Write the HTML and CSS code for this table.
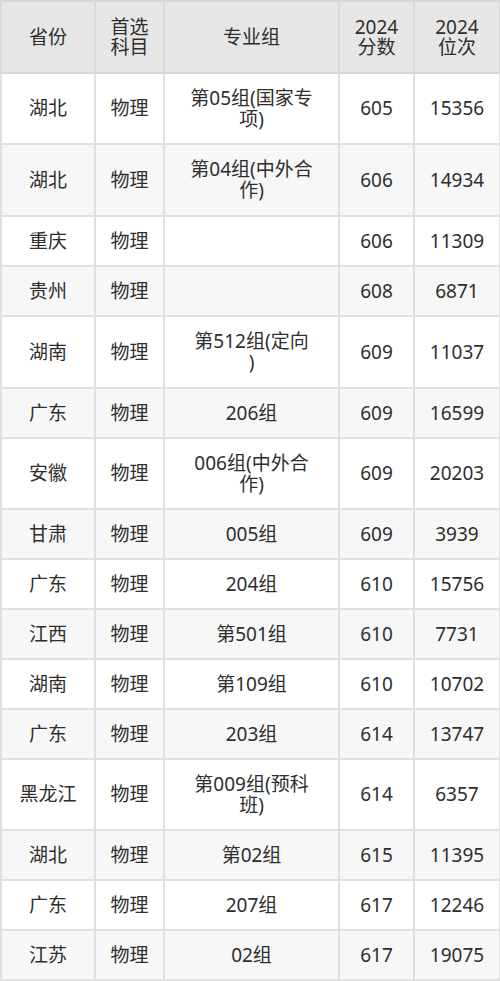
FILE: index.html
```html
<!DOCTYPE html>
<html lang="zh">
<head>
<meta charset="utf-8">
<link rel="stylesheet" href="styles.css">
</head>
<body>
<table class="tbl">
  <colgroup>
    <col class="c1"><col class="c2"><col class="c3"><col class="c4"><col class="c5">
  </colgroup>
  <thead>
    <tr class="hd"><th>省份</th><th>首选<br>科目</th><th>专业组</th><th>2024<br>分数</th><th>2024<br>位次</th></tr>
  </thead>
  <tbody>
    <tr class="tall"><td>湖北</td><td>物理</td><td>第05组(国家专<br>项)</td><td>605</td><td>15356</td></tr>
    <tr class="tall t72"><td>湖北</td><td>物理</td><td>第04组(中外合<br>作)</td><td>606</td><td>14934</td></tr>
    <tr><td>重庆</td><td>物理</td><td></td><td>606</td><td>11309</td></tr>
    <tr><td>贵州</td><td>物理</td><td></td><td>608</td><td>6871</td></tr>
    <tr class="tall t72"><td>湖南</td><td>物理</td><td>第512组(定向<br>)</td><td>609</td><td>11037</td></tr>
    <tr><td>广东</td><td>物理</td><td>206组</td><td>609</td><td>16599</td></tr>
    <tr class="tall"><td>安徽</td><td>物理</td><td>006组(中外合<br>作)</td><td>609</td><td>20203</td></tr>
    <tr><td>甘肃</td><td>物理</td><td>005组</td><td>609</td><td>3939</td></tr>
    <tr><td>广东</td><td>物理</td><td>204组</td><td>610</td><td>15756</td></tr>
    <tr><td>江西</td><td>物理</td><td>第501组</td><td>610</td><td>7731</td></tr>
    <tr><td>湖南</td><td>物理</td><td>第109组</td><td>610</td><td>10702</td></tr>
    <tr><td>广东</td><td>物理</td><td>203组</td><td>614</td><td>13747</td></tr>
    <tr class="tall"><td>黑龙江</td><td>物理</td><td>第009组(预科<br>班)</td><td>614</td><td>6357</td></tr>
    <tr><td>湖北</td><td>物理</td><td>第02组</td><td>615</td><td>11395</td></tr>
    <tr><td>广东</td><td>物理</td><td>207组</td><td>617</td><td>12246</td></tr>
    <tr><td>江苏</td><td>物理</td><td>02组</td><td>617</td><td>19075</td></tr>
  </tbody>
</table>
</body>
</html>
```

FILE: styles.css
```css
html, body {
  margin: 0;
  padding: 0;
  background: #ffffff;
}
.tbl {
  border-collapse: collapse;
  table-layout: fixed;
  width: 499px;
  font-family: "Noto Sans", "Noto Sans CJK SC", sans-serif;
  font-size: 19px;
  line-height: 21px;
  color: #2e2e2e;
}
.c1 { width: 94px; }
.c2 { width: 69px; }
.c3 { width: 175px; }
.c4 { width: 75px; }
.c5 { width: 86px; }
.tbl th, .tbl td {
  border: 2px solid #e0e0e0;
  text-align: center;
  vertical-align: middle;
  padding: 0 2px;
  font-weight: normal;
}
.hd { height: 72px; background: #e6e6e6; }
.hd th { border-color: #d8d8d8; line-height: 20px; }
.tbl tbody tr { height: 50px; }
.tbl tbody tr.tall { height: 71px; }
.tbl tbody tr.tall.t72 { height: 72px; }
.tbl tbody tr:nth-child(even) { background: #f7f7f7; }
```
